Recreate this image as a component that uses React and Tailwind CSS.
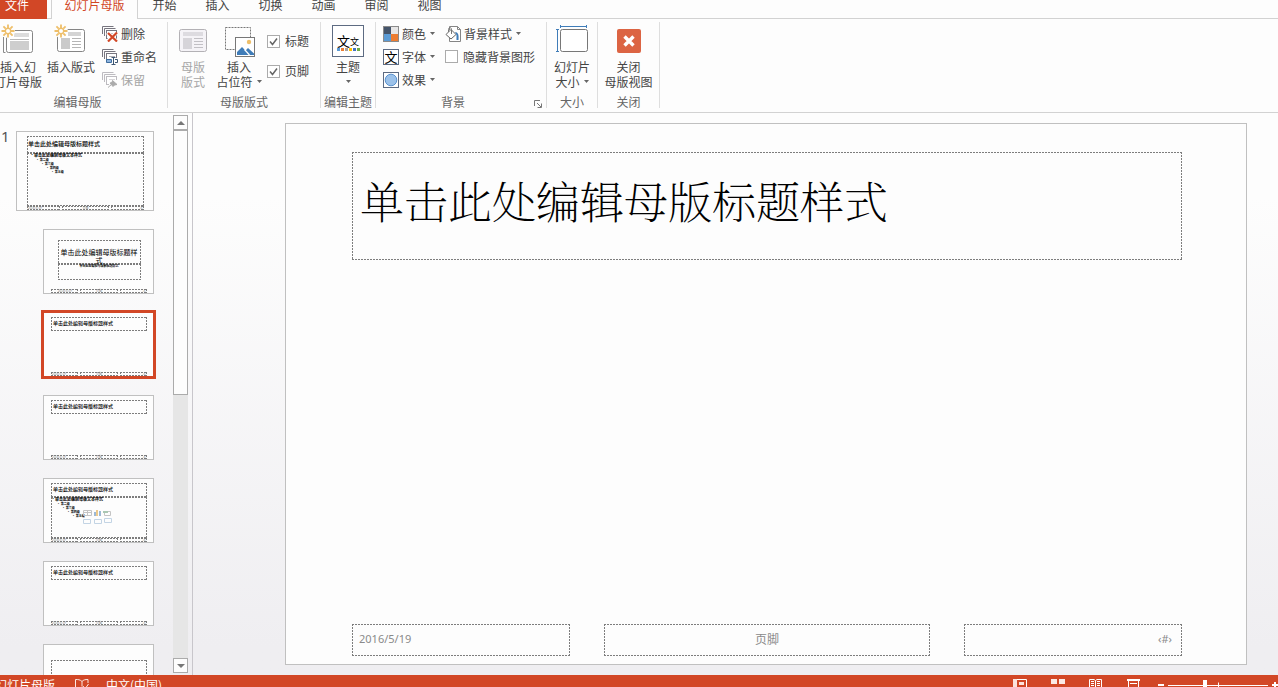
import React from "react";

const dashed =
  "[background:repeating-linear-gradient(90deg,#7d7d7d_0_2px,transparent_2px_3px)_top/100%_1px_no-repeat,repeating-linear-gradient(90deg,#7d7d7d_0_2px,transparent_2px_3px)_bottom/100%_1px_no-repeat,repeating-linear-gradient(180deg,#7d7d7d_0_2px,transparent_2px_3px)_left/1px_100%_no-repeat,repeating-linear-gradient(180deg,#7d7d7d_0_2px,transparent_2px_3px)_right/1px_100%_no-repeat]";

function Arrow({ className = "" }) {
  return (
    <svg className={`inline-block shrink-0 ${className}`} width="5" height="3" viewBox="0 0 5 3" aria-hidden="true">
      <path d="M0 0h5L2.5 3z" fill="#666" />
    </svg>
  );
}

function Sun({ x, y }) {
  return (
    <g transform={`translate(${x} ${y})`} stroke="#eebf6a" strokeWidth="1.8">
      <path d="M0-6.5V-3M0 3v3.5M-6.5 0H-3M3 0h3.5M-4.6-4.6l2.3 2.3M2.3 2.3l2.3 2.3M-4.6 4.6l2.3-2.3M2.3-2.3l2.3-2.3" />
      <circle r="2.7" fill="#fff" strokeWidth="1.4" />
    </g>
  );
}

function InsertMasterIcon() {
  return (
    <svg width="36" height="36" viewBox="0 0 36 36" aria-hidden="true">
      <path d="M3.5 14v15.500h2" stroke="#8a8a8a" fill="none" />
      <rect x="6.500" y="7.500" width="26" height="22" rx="2" fill="#fff" stroke="#858585" />
      <path d="M14 10h15v4H14z" fill="#dcdcdc" />
      <path d="M10 18h19v9H10z" fill="#cecece" />
      <path d="M10 16.500h19" stroke="#b8b8b8" />
      <circle cx="8" cy="8" r="7" fill="#fdfdfd" />
      <Sun x={8} y={8} />
    </svg>
  );
}

function InsertLayoutIcon() {
  return (
    <svg width="36" height="36" viewBox="0 0 36 36" aria-hidden="true">
      <rect x="4.500" y="6.500" width="27" height="22" rx="2" fill="#fff" stroke="#858585" />
      <path d="M15 9h13v4H15z" fill="#d4d4d4" />
      <path d="M8 15h9v11H8z" fill="#cacaca" />
      <path d="M19 15.500h9M19 18.500h9M19 21.500h9M19 24.500h9" stroke="#b5b5b5" />
      <circle cx="8" cy="8" r="7" fill="#fdfdfd" />
      <Sun x={8} y={8} />
    </svg>
  );
}

function MasterLayoutIcon() {
  return (
    <svg width="36" height="36" viewBox="0 0 36 36" aria-hidden="true">
      <rect x="4.500" y="6.500" width="27" height="22" rx="2" fill="#f5f3f7" stroke="#b3b1b5" />
      <path d="M8 9h20v4H8z" fill="#dddbe0" />
      <path d="M8 15h9v11H8z" fill="#d6d4d9" />
      <path d="M19 15.500h9M19 18.500h9M19 21.500h9M19 24.500h9" stroke="#c2c0c5" />
    </svg>
  );
}

function PlaceholderIcon() {
  return (
    <svg width="36" height="36" viewBox="0 0 36 36" aria-hidden="true">
      <rect x="4.500" y="4.500" width="25" height="22" fill="none" stroke="#777" strokeDasharray="2 1" />
      <rect x="14.500" y="14.500" width="19" height="19" fill="#fff" stroke="#777" />
      <path d="M16 32v-3l5-5 3.500 3.500L27 25l6 5.500V32z" fill="#3f7cb8" />
      <path d="m23.500 26.500 5 5.500" stroke="#fff" strokeWidth="1.200" />
      <circle cx="28" cy="19" r="2.200" fill="#eebf6a" />
    </svg>
  );
}

function SlideSizeIcon() {
  return (
    <svg width="36" height="36" viewBox="0 0 36 36" aria-hidden="true">
      <path d="M6 3.500h27M6.500 2v3M32.500 2v3M3.500 6v23M2 6.500h3M2 28.500h3" stroke="#3f7cb8" fill="none" />
      <rect x="6.500" y="6.500" width="27" height="22" rx="2" fill="#fff" stroke="#777" />
    </svg>
  );
}

function CloseIcon() {
  return (
    <svg width="36" height="36" viewBox="0 0 36 36" aria-hidden="true">
      <rect x="6" y="6" width="24" height="24" rx="2" fill="#dc6443" />
      <path d="m13.500 13.500 9 9m0-9-9 9" stroke="#fff" strokeWidth="3.400" />
    </svg>
  );
}

function StackIcon({ kind }) {
  const c = kind === "keep" ? "#bdbbc0" : "#77757f";
  return (
    <svg className="shrink-0" width="16" height="16" viewBox="0 0 16 16" aria-hidden="true">
      <path d="M.5 8V.5h11M2.500 10V2.500h11" stroke={c} fill="none" />
      <rect x="4.500" y="4.500" width="10" height="8" fill="#fff" stroke={c} />
      <path d="M7 7.500h6" stroke={c} opacity=".6" />
      {kind === "delete" && (
        <g>
          <path d="m5.500 6.500 9 9m0-9-9 9" stroke="#fdfdfd" strokeWidth="4" />
          <path d="m6 7 9 8.500M15 6.500 6 15.500" stroke="#d24726" strokeWidth="2.200" />
        </g>
      )}
      {kind === "rename" && (
        <g>
          <path d="M5 9h11v7H5z" fill="#fdfdfd" />
          <path d="M4.500 10.500h5v3h-5z" fill="#8db4de" stroke="#3f6d9e" />
          <path d="M9.500 8.500h4M9.500 15.500h4M11.500 8.500v7M13 10.500h2.500v3H13" stroke="#3e5672" fill="none" />
        </g>
      )}
      {kind === "keep" && (
        <g>
          <path d="M7 8h9v8H7z" fill="#fdfdfd" />
          <path d="m10.500 8.500 4.500 4-2.500.5-1.500 1.500-3-3.500 2-.5zM6 15.500l3.500-3" fill="#ababab" stroke="#ababab" />
        </g>
      )}
    </svg>
  );
}

function ColorsIcon() {
  return (
    <svg className="shrink-0" width="16" height="16" viewBox="0 0 16 16" aria-hidden="true">
      <path d="M0 0h16v16H0z" fill="#8a8a8a" />
      <path d="M1 1h7v7H1z" fill="#44546a" />
      <path d="M8 1h7v7H8z" fill="#e7e6e6" />
      <path d="M1 8h7v7H1z" fill="#5b9bd5" />
      <path d="M8 8h7v7H8z" fill="#ed7d31" />
    </svg>
  );
}

function EffectsIcon() {
  return (
    <svg className="shrink-0" width="16" height="16" viewBox="0 0 16 16" aria-hidden="true">
      <rect x=".5" y=".5" width="15" height="15" fill="#fff" stroke="#5d6b82" />
      <circle cx="8" cy="8" r="5.800" fill="#9cc2ea" stroke="#5b93cf" />
    </svg>
  );
}

function BackgroundIcon() {
  return (
    <svg className="shrink-0" width="16" height="16" viewBox="0 0 16 16" aria-hidden="true">
      <path d="M4.500 4V.5h8l3 3v12h-11V12" fill="#fff" stroke="#858585" />
      <path d="M12.500.5v3h3" fill="none" stroke="#858585" />
      <path d="m6 3.500 5 5L6 13 1 8.500z" fill="#fff" stroke="#666" />
      <path d="M6.500 8V3.500c0-2.500-3-2.500-3 0V6" fill="none" stroke="#777" />
      <path d="M10 6c3 .5 4 2 3.500 8h-2V9z" fill="#3f7cb8" />
    </svg>
  );
}

function Group({ label, className = "", labelClass = "", children, launcher }) {
  return (
    <section className="mt-[3px] mb-1 flex shrink-0 flex-col border-r border-[#dedede]">
      <div className={`flex h-[73px] items-start ${className}`}>{children}</div>
      <div className={`flex h-[13px] items-center ${labelClass}`}>
        <span className="flex-1 text-center leading-[14px] text-[#666]">{label}</span>
        {launcher && (
          <button className="flex h-3 w-4 items-end justify-center" aria-label="背景设置">
            <svg width="8" height="8" viewBox="0 0 8 8" aria-hidden="true">
              <path d="M.5 6V.5H6M3 3l4 4M7.500 3.500v4h-4" stroke="#777" fill="none" />
            </svg>
          </button>
        )}
      </div>
    </section>
  );
}

function BigButton({ icon, lines, className = "", arrow, arrowBelow, disabled }) {
  return (
    <button
      disabled={disabled}
      className={`flex shrink-0 flex-col items-center whitespace-nowrap leading-[15px] ${disabled ? "text-[#a6a6a6]" : ""} ${className}`}
    >
      <span className="flex h-[37px] items-end">{icon}</span>
      {lines.map((line, i) => (
        <span key={line} className="flex h-[15px] items-center gap-1">
          {line}
          {arrow && i === lines.length - 1 && <Arrow />}
        </span>
      ))}
      {arrowBelow && (
        <span className="flex h-[15px] items-center">
          <Arrow />
        </span>
      )}
    </button>
  );
}

function SmallButton({ icon, label, arrow, disabled }) {
  return (
    <button
      disabled={disabled}
      className={`flex h-[23px] items-center whitespace-nowrap ${disabled ? "text-[#a6a6a6]" : ""}`}
    >
      {icon}
      <span className="ml-[3px]">{label}</span>
      {arrow && <Arrow className="ml-1" />}
    </button>
  );
}

function Check({ label, checked, className = "" }) {
  return (
    <label className={`flex items-center gap-[5px] whitespace-nowrap ${className}`}>
      <span className="grid size-[13px] shrink-0">
        <input
          type="checkbox"
          defaultChecked={checked}
          className="peer col-start-1 row-start-1 size-[13px] appearance-none border border-[#ababab] bg-white"
        />
        <svg
          className="pointer-events-none invisible col-start-1 row-start-1 peer-checked:visible"
          width="13"
          height="13"
          viewBox="0 0 13 13"
          aria-hidden="true"
        >
          <path d="m3 6.500 2.500 3L10 3.500" stroke="#666" strokeWidth="1.500" fill="none" />
        </svg>
      </span>
      {label}
    </label>
  );
}

function Tabs() {
  return (
    <nav className="flex h-[19px] shrink-0 text-[12px] leading-[10px]">
      <button className="flex w-[47px] items-start bg-[#d24726] pl-[5px] text-white">文件</button>
      <span className="w-1 border-b border-[#d2d2d2]" />
      <button className="flex w-[87px] items-start justify-center border-x border-[#d2d2d2] text-[#d24726]">
        幻灯片母版
      </button>
      {["开始", "插入", "切换", "动画", "审阅", "视图"].map((t) => (
        <button key={t} className="flex w-[53px] items-start justify-center border-b border-[#d2d2d2]">
          {t}
        </button>
      ))}
      <span className="flex-1 border-b border-[#d2d2d2]" />
    </nav>
  );
}

const themeColors = ["bg-[#5b9bd5]", "bg-[#ed7d31]", "bg-[#a5a5a5]", "bg-[#ffc000]", "bg-[#4472c4]", "bg-[#70ad47]"];

function Ribbon() {
  return (
    <div className="flex shrink-0 border-b border-[#d2d2d2]">
      <Group label="编辑母版" className="w-[167px]" labelClass="pr-3">
        <BigButton className="w-9" icon={<InsertMasterIcon />} lines={["插入幻", "灯片母版"]} />
        <BigButton className="ml-[11px] w-12" icon={<InsertLayoutIcon />} lines={["插入版式"]} />
        <div className="ml-[7px]">
          <SmallButton icon={<StackIcon kind="delete" />} label="删除" />
          <SmallButton icon={<StackIcon kind="rename" />} label="重命名" />
          <SmallButton icon={<StackIcon kind="keep" />} label="保留" disabled />
        </div>
      </Group>
      <Group label="母版版式" className="w-[152px] pl-1">
        <BigButton className="w-[42px]" icon={<MasterLayoutIcon />} lines={["母版", "版式"]} disabled />
        <BigButton className="w-[50px]" icon={<PlaceholderIcon />} lines={["插入", "占位符"]} arrow />
        <div className="ml-[3px] pt-1">
          <Check label="标题" checked className="h-[30px]" />
          <Check label="页脚" checked className="h-[30px]" />
        </div>
      </Group>
      <Group label="编辑主题" className="w-[54px] justify-center">
        <BigButton
          className="w-12"
          arrowBelow
          icon={
            <span className="flex h-[34px] items-start">
              <span className="flex size-8 flex-col items-center justify-end border border-[#5d6b82] bg-white pb-[5px] text-black">
                <span className="flex items-end leading-none">
                  <span className="text-[13px] leading-[14px]">文</span>
                  <span className="text-[9px] leading-[12px]">文</span>
                </span>
                <span className="flex gap-px">
                  {themeColors.map((c) => (
                    <span key={c} className={`size-[3px] ${c}`} />
                  ))}
                </span>
              </span>
            </span>
          }
          lines={["主题"]}
        />
      </Group>
      <Group label="背景" className="w-[170px] pl-[7px]" launcher>
        <div>
          <SmallButton icon={<ColorsIcon />} label="颜色" arrow />
          <SmallButton
            icon={
              <span className="flex size-4 items-center justify-center border border-[#5d6b82] bg-white text-[13px] leading-none text-black">
                文
              </span>
            }
            label="字体"
            arrow
          />
          <SmallButton icon={<EffectsIcon />} label="效果" arrow />
        </div>
        <div className="ml-[10px]">
          <SmallButton icon={<BackgroundIcon />} label="背景样式" arrow />
          <Check label="隐藏背景图形" className="h-[23px]" />
        </div>
      </Group>
      <Group label="大小" className="w-[50px] justify-center">
        <BigButton className="w-10" icon={<SlideSizeIcon />} lines={["幻灯片", "大小"]} arrow />
      </Group>
      <Group label="关闭" className="w-[61px] justify-center">
        <BigButton className="w-12" icon={<CloseIcon />} lines={["关闭", "母版视图"]} />
      </Group>
    </div>
  );
}

function ThumbFooter({ className = "" }) {
  return (
    <div className={`mt-auto flex justify-between text-[3px] leading-[4px] text-[#888] ${className}`}>
      <span className={`h-1 w-[28%] pl-px ${dashed}`}>2016/5/19</span>
      <span className={`h-1 w-[40%] text-center ${dashed}`}>页脚</span>
      <span className={`h-1 w-[28%] pr-px text-right ${dashed}`}>‹#›</span>
    </div>
  );
}

const levels = ["pl-[6px]", "pl-[11px]", "pl-[16px]", "pl-[21px]"];
const levelNames = ["第二级", "第三级", "第四级", "第五级"];

function Outline() {
  return (
    <div className="text-[3px] font-bold leading-[4px] text-black">
      <p className="text-[4px] leading-[5px]">•单击此处编辑母版文本样式</p>
      {levels.map((l, i) => (
        <p key={l} className={l}>
          • {levelNames[i]}
        </p>
      ))}
    </div>
  );
}

function ContentIcons() {
  return (
    <svg className="absolute top-[12px] left-[32px]" width="30" height="16" viewBox="0 0 30 16" aria-hidden="true">
      <g fill="none" stroke="#c4c4c4">
        <path d="M.5 1.500h8v5h-8zM.5 3.500h8M4.500 1.500v5M21.500 2.500h6v4h-6z" />
        <path d="M.5 10.500h7v4h-7zM11.500 10.500h7v4h-7zM21.500 9.500h7v4h-7z" stroke="#c3d4e4" />
      </g>
      <path d="M11 3h2v4h-2zM16 2h2v5h-2z" fill="#9db9d6" />
      <path d="M13 1h2v6h-2z" fill="#ecc98b" />
      <path d="M20 2h5v2h-5z" fill="#a9c7b2" />
    </svg>
  );
}

function LayoutThumb({ selected, content }) {
  return (
    <button
      aria-label="版式"
      className={`flex h-[65px] w-[111px] shrink-0 flex-col border bg-[#fdfdfd] pt-1 pr-[6px] pl-[7px] text-left ${
        selected ? "border-[#d24726] ring-2 ring-[#d24726]" : "border-[#c0c0c0]"
      }`}
    >
      <span className={`block h-[14px] w-full pl-[2px] text-[5px] font-medium leading-[12px] text-black ${dashed}`}>
        单击此处编辑母版标题样式
      </span>
      {content && (
        <span className={`relative block w-full flex-1 ${dashed}`}>
          <Outline />
          <ContentIcons />
        </span>
      )}
      <ThumbFooter className="w-full" />
    </button>
  );
}

function ScrollBar() {
  return (
    <div className="my-[2px] flex w-[15px] shrink-0 flex-col bg-[#e6e6e6]">
      <button aria-label="向上滚动" className="flex h-[15px] items-center justify-center border border-[#ababab] bg-[#fdfdfd]">
        <svg width="8" height="4" viewBox="0 0 8 4" aria-hidden="true">
          <path d="M0 4h8L4 0z" fill="#777" />
        </svg>
      </button>
      <div className="h-[265px] border border-[#ababab] bg-[#fdfdfd]" />
      <button
        aria-label="向下滚动"
        className="mt-auto flex h-[15px] items-center justify-center border border-[#ababab] bg-[#fdfdfd]"
      >
        <svg width="8" height="4" viewBox="0 0 8 4" aria-hidden="true">
          <path d="M0 0h8L4 4z" fill="#777" />
        </svg>
      </button>
    </div>
  );
}

function Sidebar() {
  return (
    <aside className="flex w-[193px] shrink-0 overflow-hidden border-r border-[#c8c6cb] pr-1">
      <div className="flex flex-1 items-start overflow-hidden pt-[18px]">
        <span className="w-4 shrink-0 pl-px font-['Noto_Sans'] text-[15px] leading-[10px] text-[#555]">1</span>
        <div className="flex w-[138px] shrink-0 flex-col items-end gap-[18px]">
          <button
            aria-label="幻灯片母版"
            className="flex h-20 w-full shrink-0 flex-col border border-[#c0c0c0] bg-[#fdfdfd] pt-1 pr-[9px] pl-[10px] text-left"
          >
            <span className={`block h-[17px] w-full pl-px text-[6px] font-medium leading-[15px] text-black ${dashed}`}>
              单击此处编辑母版标题样式
            </span>
            <span className={`block w-full flex-1 pl-[3px] ${dashed}`}>
              <Outline />
            </span>
            <ThumbFooter className="w-full" />
          </button>
          <button
            aria-label="标题幻灯片版式"
            className="flex h-[65px] w-[111px] shrink-0 flex-col items-center border border-[#c0c0c0] bg-[#fdfdfd] pt-[10px] pr-[6px] pl-[7px]"
          >
            <span className={`flex h-6 w-[83px] items-end justify-center px-[3px] text-center text-[7px] leading-[8px] text-black ${dashed}`}>
              单击此处编辑母版标题样式
            </span>
            <span className={`h-4 w-[83px] text-center text-[3px] font-bold leading-[4px] text-black ${dashed}`}>
              单击此处编辑母版副标题样式
            </span>
            <ThumbFooter className="w-full" />
          </button>
          <LayoutThumb selected />
          <LayoutThumb />
          <LayoutThumb content />
          <LayoutThumb />
          <div className="h-[65px] w-[111px] shrink-0 border border-[#c0c0c0] bg-[#fdfdfd] pt-[15px] pr-[6px] pl-[7px]">
            <div className={`h-10 ${dashed}`} />
          </div>
        </div>
      </div>
      <ScrollBar />
    </aside>
  );
}

function Slide() {
  return (
    <main className="flex min-w-0 flex-1 py-[10px] pr-[31px] pl-[92px]">
      <div className="flex min-w-0 flex-1 flex-col justify-between border border-[#c0c0c0] bg-[#fdfdfd] pt-7 pr-16 pb-2 pl-[66px]">
        <h1
          className={`flex h-[108px] items-center overflow-hidden whitespace-nowrap pb-3 pl-2 font-['Noto_Serif_CJK_SC','Noto_Sans_CJK_SC',serif] text-[44px] font-extralight leading-none text-black ${dashed}`}
        >
          单击此处编辑母版标题样式
        </h1>
        <footer className="grid h-8 grid-cols-[218fr_326fr_218fr] gap-[34px] text-[12px] text-[#8a8a8a]">
          <div className={`flex items-center pb-[2px] pl-[7px] font-['Noto_Sans'] text-[11px] ${dashed}`}>2016/5/19</div>
          <div className={`flex items-center justify-center pb-[2px] ${dashed}`}>页脚</div>
          <div className={`flex items-center justify-end pr-[10px] pb-[2px] font-['Noto_Sans'] text-[11px] ${dashed}`}>‹#›</div>
        </footer>
      </div>
    </main>
  );
}

function StatusBar() {
  return (
    <footer className="flex h-3 shrink-0 items-start overflow-hidden bg-[#d24726] text-[12px] leading-[20px] whitespace-nowrap text-white">
      <span className="flex w-[55px] justify-end">幻灯片母版</span>
      <button aria-label="拼写检查" className="ml-5 h-4 pt-1">
        <svg width="14" height="12" viewBox="0 0 14 12" aria-hidden="true">
          <path d="M7 2.500C5 .5 3 .5.5 .5v9h5M7 2.500v5M7 2.500C8.500.8 10 .5 13 .5V4M8 7l2 3 3.500-5" stroke="#fbe9e4" fill="none" />
        </svg>
      </button>
      <span className="ml-[17px] flex-1">中文(中国)</span>
      <div className="flex items-start gap-6 pt-1">
        <button aria-label="普通视图">
          <svg width="14" height="12" viewBox="0 0 14 12" aria-hidden="true">
            <path d="M.5.5h13v11H.5z" fill="none" stroke="#fff" />
            <path d="M0 0h4v12H0zM6 3h5v3H6z" fill="#fbe3dc" />
          </svg>
        </button>
        <button aria-label="幻灯片浏览">
          <svg width="14" height="12" viewBox="0 0 14 12" aria-hidden="true">
            <path d="M0 0h6v5H0zM8 0h6v5H8zM0 9h6v3H0zM8 9h6v3H8z" fill="#fbe9e4" />
          </svg>
        </button>
        <button aria-label="阅读视图">
          <svg width="14" height="12" viewBox="0 0 14 12" aria-hidden="true">
            <path d="M5 .5H.5v9H5l1.500 1 1.500-1h4.500v-9H8L6.500 1.500zM6.500 1.500v9M2 2.500h3M2 4.500h3M2 6.500h3M8 2.500h3M8 4.500h3M8 6.500h3" stroke="#fff" fill="none" />
          </svg>
        </button>
        <button aria-label="幻灯片放映">
          <svg width="14" height="12" viewBox="0 0 14 12" aria-hidden="true">
            <path d="M0 1h13" stroke="#fff" strokeWidth="2" />
            <path d="M1.500 1v9h10V1M3 4.500h7" stroke="#fff" fill="none" />
          </svg>
        </button>
      </div>
      <div className="ml-[17px] flex h-5 items-center">
        <button aria-label="缩小" className="h-[2px] w-[6px] bg-white" />
        <span className="relative ml-1 flex w-[100px] items-center">
          <input
            type="range"
            aria-label="缩放"
            defaultValue={36}
            className="h-px w-full appearance-none bg-white [&::-webkit-slider-thumb]:h-[11px] [&::-webkit-slider-thumb]:w-1 [&::-webkit-slider-thumb]:appearance-none [&::-webkit-slider-thumb]:bg-white"
          />
          <span className="absolute top-1/2 left-1/2 h-[5px] w-px -translate-y-1/2 bg-white" />
        </span>
        <button aria-label="放大" className="ml-1 flex w-[6px] justify-end">
          <svg width="6" height="6" viewBox="0 0 6 6" aria-hidden="true">
            <path d="M3 0v6M0 3h6" stroke="#fff" strokeWidth="2" />
          </svg>
        </button>
      </div>
    </footer>
  );
}

export default function App() {
  return (
    <div className="flex h-screen flex-col overflow-hidden bg-[#fdfdfd] font-['Noto_Sans_CJK_SC',sans-serif] text-[12px] leading-4 text-[#444]">
      <Tabs />
      <Ribbon />
      <div className="flex min-h-0 flex-1 bg-linear-to-b from-[#fdfdfd] from-15% to-[#efeef1] to-95%">
        <Sidebar />
        <Slide />
      </div>
      <StatusBar />
    </div>
  );
}
